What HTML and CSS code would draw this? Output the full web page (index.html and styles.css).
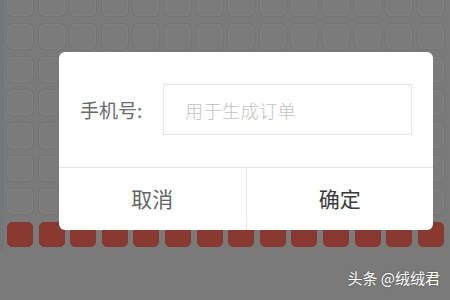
FILE: index.html
```html
<!DOCTYPE html>
<html lang="zh">
<head>
<meta charset="utf-8">
<link rel="stylesheet" href="styles.css">
</head>
<body>
<div class="screen">
  <div class="strip"></div>
  <div class="seats" id="seats"></div>
  <div class="dialog">
    <div class="form-row">
      <span class="label">手机号:</span>
      <div class="input">用于生成订单</div>
    </div>
    <div class="actions">
      <div class="btn cancel">取消</div>
      <div class="btn ok">确定</div>
    </div>
  </div>
  <div class="watermark">头条 @绒绒君</div>
</div>
<script src="script.js"></script>
</body>
</html>
```
FILE: script.js
```js
var s = document.getElementById('seats');
var html = '';
for (var r = 0; r < 8; r++) {
  for (var c = 0; c < 14; c++) {
    html += '<div class="seat' + (r === 7 ? ' sold' : '') + '"></div>';
  }
}
s.innerHTML = html;
```
FILE: styles.css
```css
html, body {
  margin: 0;
  padding: 0;
}
body {
  width: 450px;
  height: 300px;
  overflow: hidden;
  background: #7a7a7a;
  font-family: "Noto Sans CJK SC", "Noto Sans", sans-serif;
}
.screen {
  position: relative;
  width: 450px;
  height: 300px;
  overflow: hidden;
  background: #7a7a7a;
}
.strip {
  position: absolute;
  left: 0;
  top: 0;
  width: 4px;
  height: 250px;
  background: #74777a;
}
.seats {
  display: grid;
  grid-template-columns: repeat(14, 26px);
  grid-auto-rows: 25px;
  column-gap: 5.6px;
  row-gap: 8px;
  padding-left: 7px;
  margin-top: -9px;
}
.seat {
  box-sizing: border-box;
  border-radius: 5px;
  background: #7b7b7b;
  border: 1px solid #818181;
  box-shadow: 0 0 0 1px #747474;
}
.seat.sold {
  background: #883a31;
  border-color: #863930;
  box-shadow: none;
}
.dialog {
  position: absolute;
  left: 59px;
  top: 52px;
  width: 374px;
  height: 178px;
  background: #fff;
  border-radius: 6px;
  display: flex;
  flex-direction: column;
}
.form-row {
  display: flex;
  align-items: center;
  height: 116px;
  padding-left: 21px;
  border-bottom: 1px solid #e8e8e8;
  box-sizing: border-box;
}
.label {
  font-size: 19px;
  color: #6a6a6a;
  width: 83px;
}
.input {
  box-sizing: border-box;
  width: 249px;
  height: 51px;
  border: 1px solid #e6e6e6;
  padding-left: 21px;
  display: flex;
  align-items: center;
  font-size: 18px;
  font-weight: 300;
  color: #c2c2c2;
  letter-spacing: 0.5px;
}
.actions {
  flex: 1;
  display: flex;
}
.btn {
  flex: 1;
  display: flex;
  align-items: center;
  justify-content: center;
  font-size: 21px;
  padding-bottom: 2px;
}
.cancel {
  color: #666;
  border-right: 1px solid #e8e8e8;
}
.ok {
  color: #3a3a3a;
}
.watermark {
  position: absolute;
  right: 10px;
  top: 267px;
  font-size: 15px;
  color: #fff;
  text-shadow: 0 0 2px rgba(0,0,0,0.4);
}
```
